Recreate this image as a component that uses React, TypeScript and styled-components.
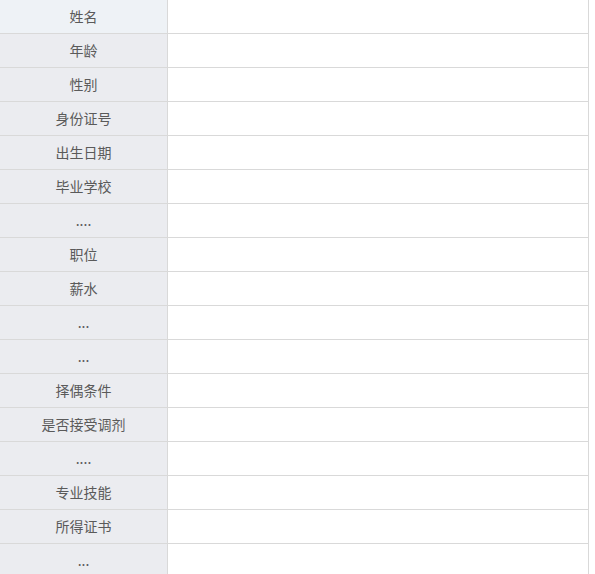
import React from "react";
import styled, { createGlobalStyle } from "styled-components";

const Global = createGlobalStyle`
  html, body { margin: 0; padding: 0; background: #ffffff; overflow: hidden; }
  body { font-family: "Noto Sans CJK SC", "Liberation Sans", sans-serif; }
`;

const Table = styled.div`
  width: 589px;
  display: flex;
  flex-direction: column;
`;

const Row = styled.div`
  display: grid;
  grid-template-columns: 168px 420px;
  height: 34px;
  box-sizing: border-box;
  border-bottom: 1px solid #d9d9d9;
  border-right: 1px solid #d9d9d9;
`;

const Label = styled.div<{ $active?: boolean }>`
  background: ${(p) => (p.$active ? "#eef2f6" : "#ebecf0")};
  border-right: 1px solid #d9d9d9;
  color: #5a5a5a;
  font-size: 14px;
  display: flex;
  align-items: center;
  justify-content: center;
  line-height: 1;
  padding-bottom: 1px;
`;

const Value = styled.div`
  background: #ffffff;
`;

const labels = [
  "姓名",
  "年龄",
  "性别",
  "身份证号",
  "出生日期",
  "毕业学校",
  "....",
  "职位",
  "薪水",
  "...",
  "...",
  "择偶条件",
  "是否接受调剂",
  "....",
  "专业技能",
  "所得证书",
  "...",
];

export default function App() {
  return (
    <>
      <Global />
      <Table>
        {labels.map((l, i) => (
          <Row key={i}>
            <Label $active={i === 0}>{l}</Label>
            <Value />
          </Row>
        ))}
      </Table>
    </>
  );
}
